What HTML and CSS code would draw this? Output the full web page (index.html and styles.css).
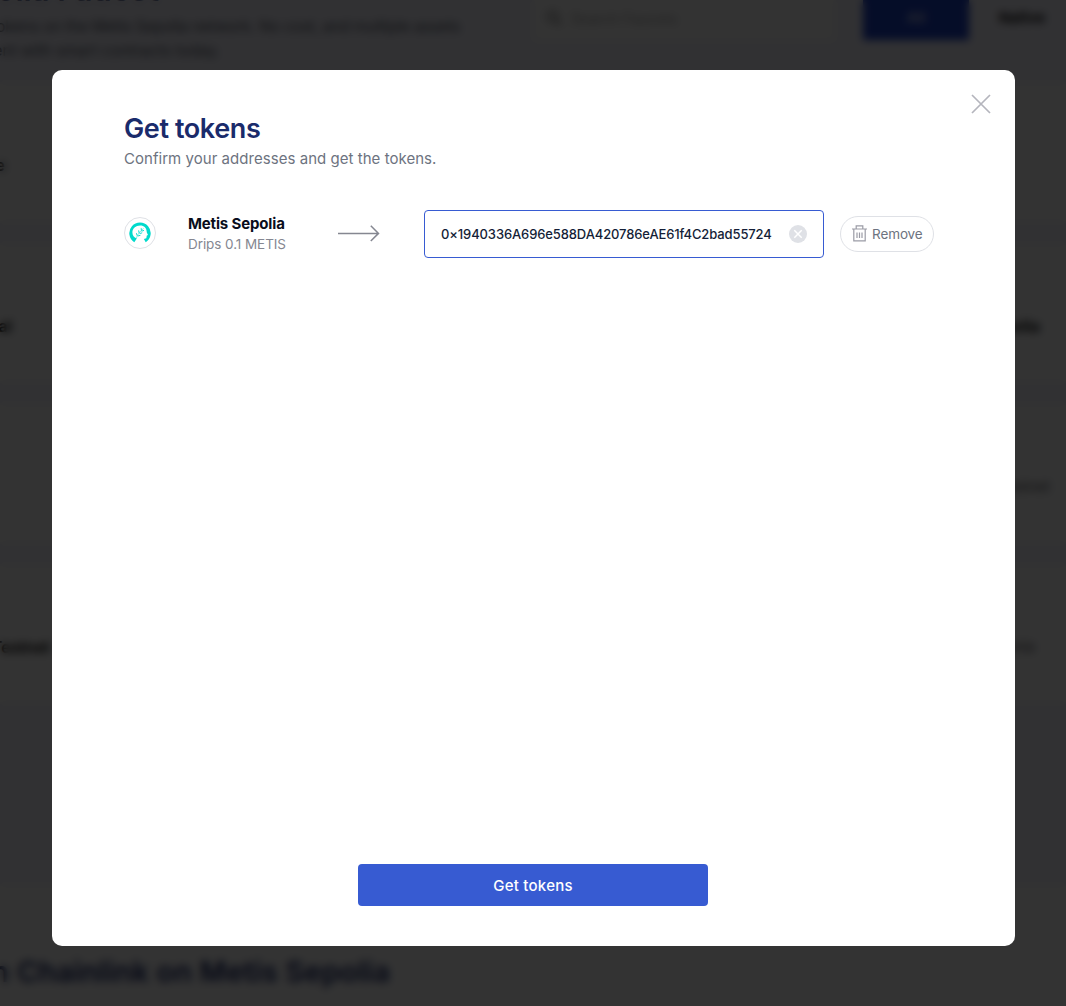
FILE: index.html
```html
<!DOCTYPE html>
<html lang="en">
<head>
<meta charset="utf-8">
<title>Get tokens</title>
<link rel="stylesheet" href="styles.css">
</head>
<body>
<div class="page" aria-hidden="true">
  <header class="hero">
    <div class="intro">
      <div class="intro-title">Sepolia Faucet</div>
      <div class="intro-text">tokens on the Metis Sepolia network. No cost, and multiple assets</div>
      <div class="intro-text short">ment with smart contracts today.</div>
    </div>
    <div class="search">
      <svg width="18" height="18" viewBox="0 0 18 18" fill="none" stroke="#777" stroke-width="2"><circle cx="7.5" cy="7.5" r="5"/><path d="M11.5 11.5 16 16"/></svg>
      <span>Search Faucets</span>
    </div>
    <div class="tab active">All</div>
    <div class="tab">Native</div>
  </header>
  <main class="cards">
    <div class="card"><b class="w5">Base</b></div>
    <div class="card"><b class="w12">Metal</b><b class="end r26">Sepolia</b></div>
    <div class="card"><span class="end r16">Testnet</span></div>
    <div class="card"><b class="w50">Testnet</b><span class="end r31">Sepolia</span></div>
  </main>
  <footer class="more">Build with Chainlink on Metis Sepolia</footer>
</div>
<div class="overlay">
  <section class="modal">
    <button class="close" aria-label="Close"><svg width="20" height="20" viewBox="0 0 20 20" fill="none" stroke="#b4b5bd" stroke-width="1.7"><path d="M1 1 19 19M19 1 1 19"/></svg></button>
    <h1>Get tokens</h1>
    <p class="sub">Confirm your addresses and get the tokens.</p>
    <div class="row">
      <div class="logo">
        <svg width="30" height="30" viewBox="0 0 30 30"><path d="M9.3 24.3A10.7 10.7 0 1 1 20.7 24.3L18.9 20.9 21.3 20.3 21.8 17.6 23 17 21.8 14.6C21.8 9.8 19 7.4 15.2 7.4 10.7 7.4 7.4 10.4 7.4 14.5 7.4 17.4 9 19.6 11.8 20.4Z" fill="#00dacc"/><g fill="none" stroke="#00dacc"><path d="M11.4 20.4C12 17 14.3 14 18.6 10.4" stroke-width=".5"/><path d="M12.2 17.6 11.4 15.2M14.1 14.9 13.6 12.4M16.4 12.7 16.2 10.2M12.8 18 15.4 17.3M14.5 15.6 17.2 14.8M16.6 13.2 19 12.4" stroke-width=".95"/></g></svg>
      </div>
      <div class="net"><strong>Metis Sepolia</strong><span>Drips 0.1 METIS</span></div>
      <svg class="arrow" width="42" height="18" viewBox="0 0 42 18" fill="none" stroke="#858791" stroke-width="1.5"><path d="M0 9.4H40.5M32.8 1.8 40.5 9.4 32.8 17"/></svg>
      <div class="field">
        <span>0×1940336A696e588DA420786eAE61f4C2bad55724</span>
        <svg width="18" height="18" viewBox="0 0 18 18"><circle cx="9" cy="9" r="9" fill="#dfe1e6"/><path d="m5.3 5.3 7.4 7.4m0-7.4-7.4 7.4" stroke="#fff" stroke-width="1.5"/></svg>
      </div>
      <button class="remove">
        <svg width="15" height="17" viewBox="0 0 15 17" fill="none" stroke="#9b9ca6" stroke-width="1.2"><path d="M0 4H15M4.2 4V.8H10.8V4M1.8 4V15.9H13.2V4M5 7.5V13M7.5 7.5V13M10 7.5V13"/></svg>
        <span>Remove</span>
      </button>
    </div>
    <button class="submit">Get tokens</button>
  </section>
</div>
</body>
</html>
```
FILE: styles.css
```css
* { box-sizing: border-box; }
body { margin: 0; height: 1006px; overflow: hidden; font-family: Inter, sans-serif; background: #fff; }
h1, p { margin: 0; }
button { font: inherit; padding: 0; margin: 0; border: 0; background: none; }
svg { display: block; flex: none; }

.page { height: 1006px; overflow: hidden; background: #f5f5ff; }
.hero { height: 84px; display: flex; align-items: flex-start; }
.intro { width: 460px; height: 84px; flex: none; overflow: hidden; display: flex; flex-direction: column; align-items: flex-end; white-space: nowrap; }
.intro-title { height: 45px; flex: none; line-height: 40px; margin-top: -30px; padding-right: 301px; font-size: 31px; font-weight: 600; color: #1a2b6b; }
.intro-text { font-size: 15.5px; line-height: 24px; letter-spacing: -.2px; color: #5a606e; }
.intro-text.short { padding-right: 240px; letter-spacing: 0; }
.search { margin-left: 74px; width: 300px; height: 40px; flex: none; background: #fff; display: flex; align-items: center; padding: 0 0 4px 11px; gap: 8px; color: #aaa; font-size: 14.5px; }
.tab { width: 106px; height: 40px; flex: none; line-height: 36px; text-align: center; font-size: 15px; font-weight: 600; color: #000; }
.tab.active { margin-left: 29px; background: #1c40c8; color: #c8d0f0; }
.cards { display: flex; flex-direction: column; gap: 24px; }
.card { height: 136.5px; background: #fff; display: flex; align-items: center; padding-top: 26px; overflow: hidden; font-size: 16px; color: #000; }
.card b { display: flex; justify-content: flex-end; font-weight: 600; overflow: hidden; }
.card span { font-size: 15px; color: #5f6168; }
.w5 { width: 5px; }
.w12 { width: 12px; }
.w50 { width: 50px; }
.card .end { margin-left: auto; }
.r16 { margin-right: 16px; }
.r26 { margin-right: 26px; }
.r31 { margin-right: 31px; }
.more { margin-top: 184px; height: 130px; width: 1066px; padding: 62px 676px 0 0; background: #fff; display: flex; justify-content: flex-end; white-space: nowrap; font-size: 29px; line-height: 48px; font-weight: 600; letter-spacing: .15px; color: #1a2b6b; }

.overlay { position: fixed; inset: 0; padding: 70px 51px 60px 52px; background: rgba(0, 0, 0, .8); backdrop-filter: blur(4px); }
.modal { height: 876px; background: #fff; border-radius: 10px; padding: 24px 24px 40px 72px; display: flex; flex-direction: column; }
.close { align-self: flex-end; width: 20px; height: 20px; }
h1 { margin-top: -2px; font-size: 27px; line-height: 34px; font-weight: 600; letter-spacing: -.4px; color: #1a2b6b; white-space: nowrap; }
.sub { margin-top: 3px; font-size: 15px; line-height: 20px; letter-spacing: .04px; color: #6d7380; white-space: nowrap; }
.row { margin-top: 41px; height: 48px; display: flex; align-items: center; }
.logo { position: relative; top: -1px; width: 32px; height: 32px; border: 1px solid #dfe1e6; border-radius: 50%; flex: none; }
.net { margin-left: 32px; width: 150px; display: flex; flex-direction: column; white-space: nowrap; }
.net strong { font-size: 15px; line-height: 20px; font-weight: 700; letter-spacing: -.15px; color: #0a0e1c; }
.net span { font-size: 13.5px; line-height: 20px; letter-spacing: -.07px; color: #858791; }
.arrow { margin-bottom: 2px; }
.field { margin-left: 44px; width: 400px; height: 48px; border: 1px solid #375bd2; border-radius: 4px; display: flex; align-items: center; justify-content: space-between; padding: 0 16px; font-size: 13px; font-weight: 500; letter-spacing: -.12px; color: #141e37; }
.remove { margin-left: 16px; width: 94px; height: 36px; border: 1px solid #dfe1e6; border-radius: 18px; display: flex; align-items: center; padding: 0 0 1px 11px; gap: 5px; font-size: 13.5px; letter-spacing: -.1px; color: #6d7380; }
.submit { margin: auto 0 0 234px; width: 350px; height: 42px; flex: none; background: #375bd2; border-radius: 4px; color: #fff; font-size: 15px; font-weight: 500; letter-spacing: .25px; }
```
